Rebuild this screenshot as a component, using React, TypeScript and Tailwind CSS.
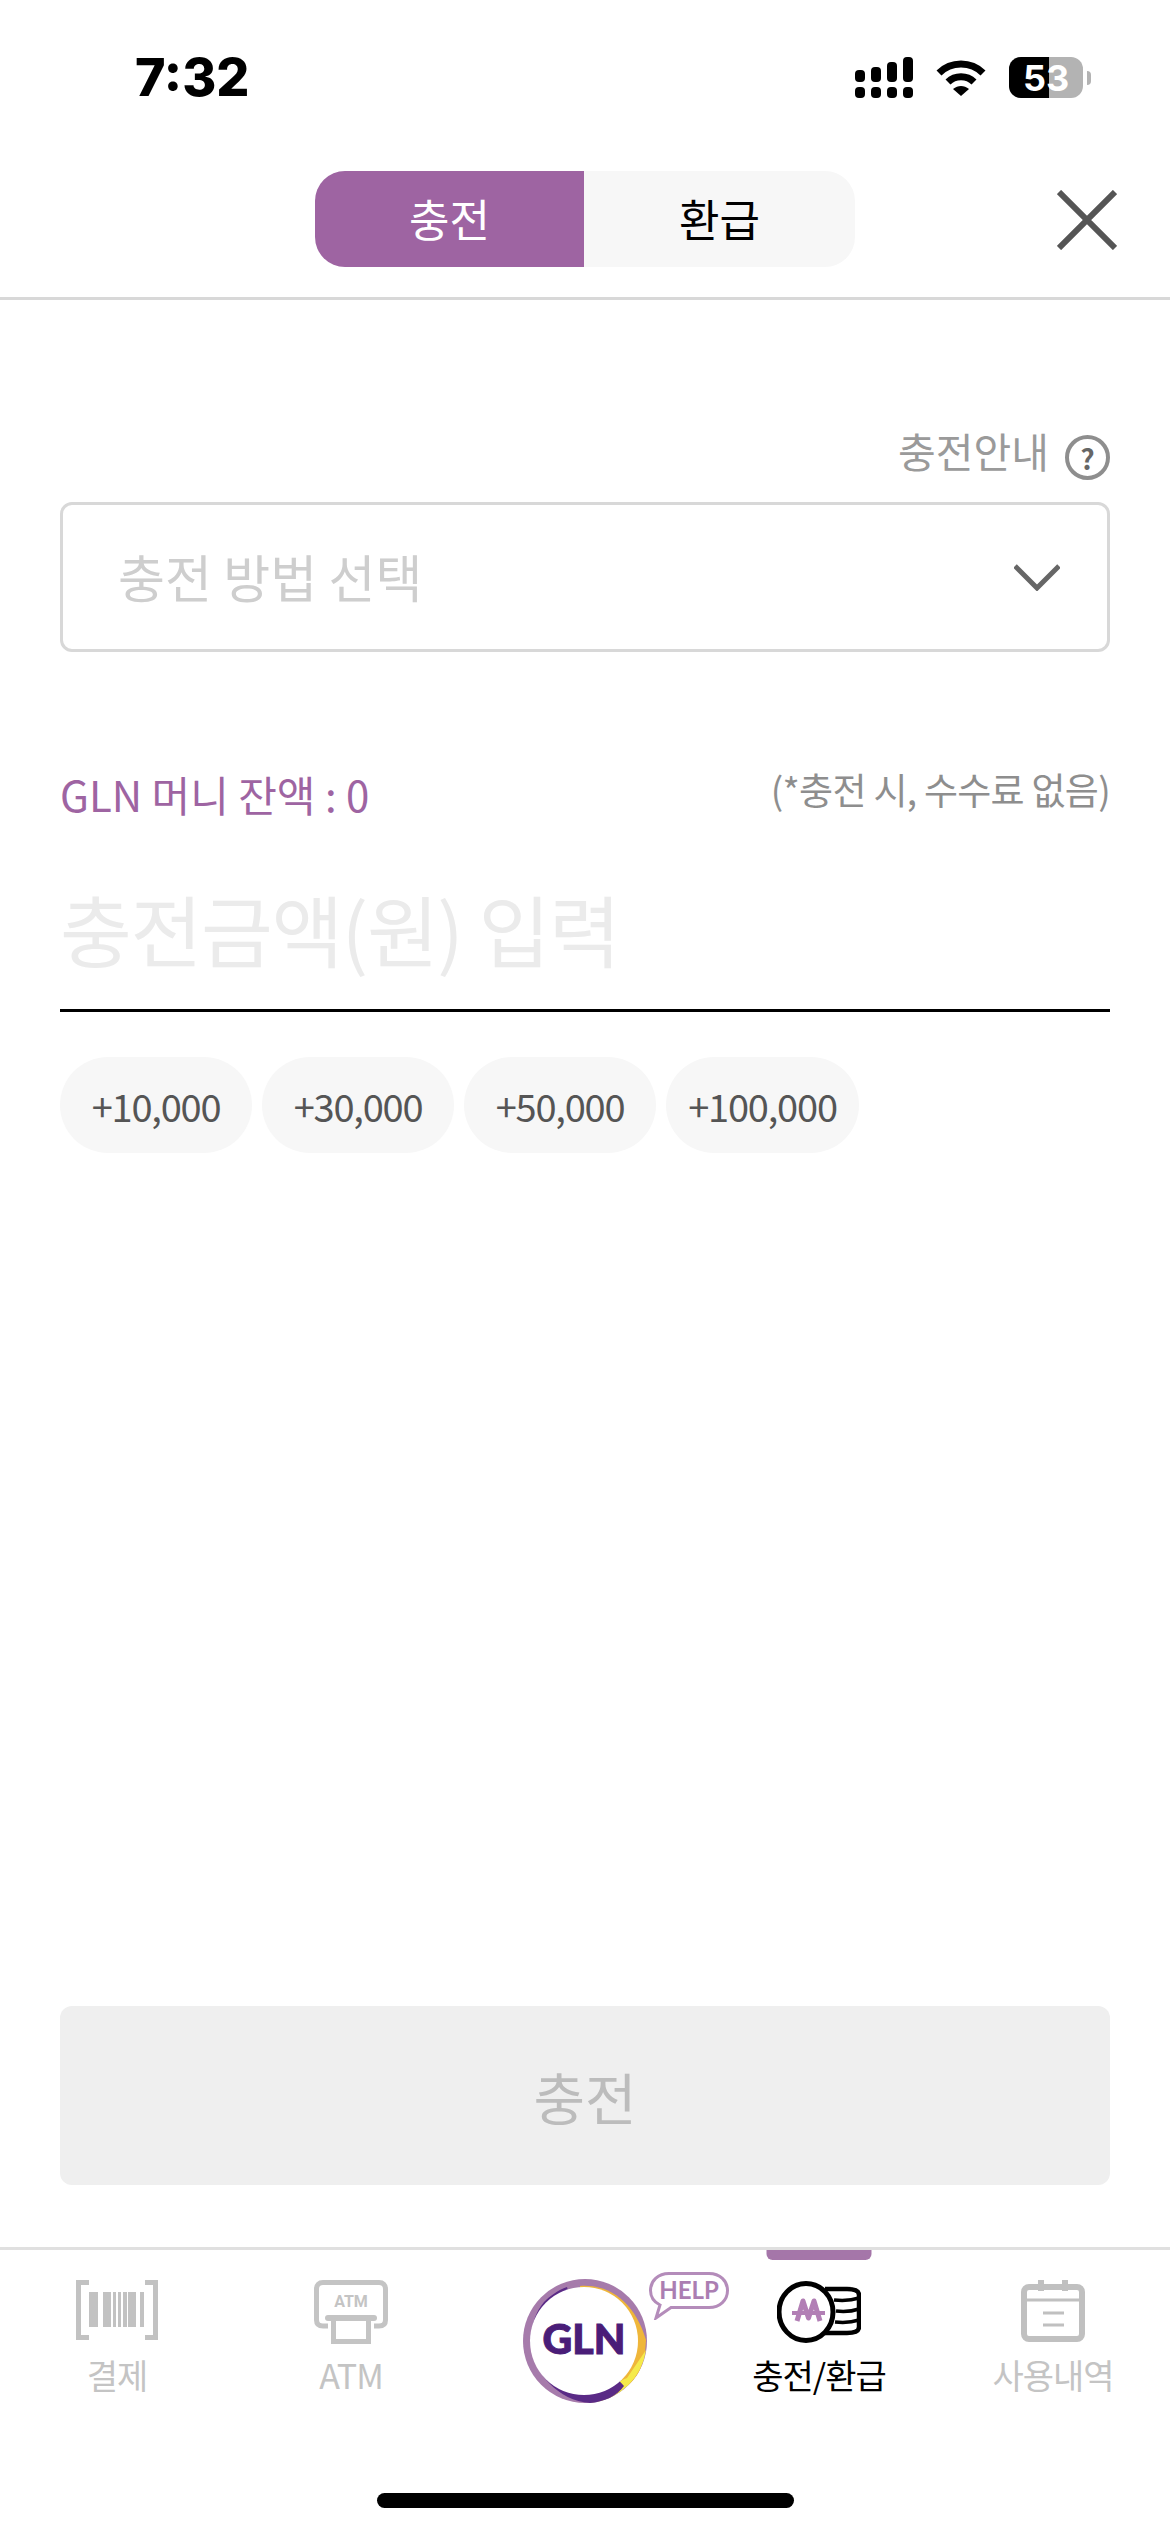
const kr = '"Noto Sans CJK KR", sans-serif';

const SignalIcon = () => (
  <svg width="58" height="41" viewBox="0 0 58 41" fill="#000">
    <rect x="0" y="13" width="10" height="12" rx="4" />
    <rect x="16" y="10" width="10" height="15" rx="4" />
    <rect x="32" y="5" width="10" height="20" rx="4" />
    <rect x="48" y="0" width="10" height="25" rx="4" />
    <rect x="0" y="30" width="10" height="11" rx="4" />
    <rect x="16" y="30" width="10" height="11" rx="4" />
    <rect x="32" y="30" width="10" height="11" rx="4" />
    <rect x="48" y="30" width="10" height="11" rx="4" />
  </svg>
);

const WifiIcon = () => (
  <svg width="50" height="37" viewBox="0 0 50 37" fill="none" stroke="#000" strokeWidth="7">
    <path d="M3 14 C15 2 35 2 47 14" />
    <path d="M12 23 C19 16 31 16 38 23" />
    <path d="M17 30 L25 37 L33 30 C28 26 22 26 17 30Z" fill="#000" stroke="none" />
  </svg>
);

const BatteryIcon = () => (
  <div className="flex items-center gap-[4px]">
    <div className="relative flex h-[41px] w-[74px] items-center justify-center overflow-hidden rounded-[12px] bg-[#b3b3b3]">
      <div className="absolute left-0 top-0 h-full w-[40px] bg-black" />
      <span className="relative text-[36px] font-bold leading-none text-white" style={{ fontFamily: 'Inter, sans-serif' }}>53</span>
    </div>
    <div className="h-[14px] w-[4px] rounded-r-full bg-[#b3b3b3]" />
  </div>
);

const BarcodeIcon = () => (
  <svg width="82" height="60" viewBox="0 0 82 60" fill="#c2c2c2">
    <path d="M13 2.5H2.5V57.5H13" fill="none" stroke="#c2c2c2" strokeWidth="5" />
    <path d="M69 2.5H79.5V57.5H69" fill="none" stroke="#c2c2c2" strokeWidth="5" />
    <rect x="13" y="12" width="9" height="35" />
    <rect x="27" y="12" width="8" height="35" />
    <rect x="37" y="12" width="3" height="35" />
    <rect x="42" y="12" width="3" height="35" />
    <rect x="47" y="12" width="4" height="35" />
    <rect x="52" y="12" width="8" height="35" />
    <rect x="64" y="12" width="4" height="35" />
  </svg>
);

const AtmIcon = () => (
  <svg width="74" height="64" viewBox="0 0 74 64" fill="none" stroke="#c4c4c4">
    <path d="M14 46H9C5 46 2.5 44 2.5 40V9C2.5 5 5 2.5 9 2.5H65C69 2.5 71.5 5 71.5 9V40C71.5 44 69 46 65 46H60" strokeWidth="5" />
    <path d="M14 38H60" strokeWidth="6" strokeLinecap="round" />
    <path d="M19.5 38V61.5H54.5V38" strokeWidth="5" />
    <text x="37" y="27" textAnchor="middle" fontSize="16" fontWeight="700" fill="#c4c4c4" stroke="none" fontFamily="Roboto, sans-serif">ATM</text>
  </svg>
);

const CoinIcon = () => (
  <svg width="84" height="64" viewBox="0 0 84 64" fill="none">
    <path d="M48 9H70C78 9 82 11 82 15V47C82 51 78 53 70 53H48" stroke="#000" strokeWidth="4.5" />
    <path d="M57 20C68 21 76 20 82 18M59 31C68 32 76 31 82 29M58 42C68 43 76 42 82 40" stroke="#000" strokeWidth="3.5" />
    <ellipse cx="29" cy="32" rx="27" ry="28.5" fill="#fff" stroke="#000" strokeWidth="5" />
    <path d="M20 41L26 21L31.5 38L37 21L43 41" stroke="#b27fb5" strokeWidth="5" strokeLinejoin="round" />
    <path d="M15 33H48" stroke="#b27fb5" strokeWidth="4" />
  </svg>
);

const CalendarIcon = () => (
  <svg width="64" height="62" viewBox="0 0 64 62" fill="none" stroke="#c0c0c0">
    <rect x="3" y="7" width="58" height="52" rx="5" strokeWidth="6" />
    <path d="M3 20H61" strokeWidth="3" />
    <path d="M20 0V11M44 0V11" strokeWidth="6" />
    <path d="M22 33H43M22 45H43" strokeWidth="3" />
  </svg>
);

const GlnLogo = () => (
  <svg width="126" height="126" viewBox="0 0 126 126">
    <circle cx="63" cy="63" r="62" fill="#a67bab" />
    <path d="M58 8C90 6 113 26 124 62L123 75C120 90 115 100 105 108L60 63Z" fill="#efb63a" />
    <path d="M124 72A62 62 0 0 1 70 124.6L75 113L105 100Z" fill="#f5ea4a" />
    <path d="M45 9C36 12 28 18 22 24C14 33 9 48 8 63C10 80 17 95 28 106C38 116 52 124 68 125C82 124 95 118 102 108L60 63Z" fill="#5a2a86" />
    <circle cx="62" cy="63" r="54" fill="#fff" />
    <text x="62" y="76" textAnchor="middle" fontSize="41" fontWeight="900" fill="#4a1d78" stroke="#4a1d78" strokeWidth="1" fontFamily="Lato, sans-serif">GLN</text>
  </svg>
);

const HelpBubble = () => (
  <svg width="80" height="48" viewBox="0 0 80 48">
    <path d="M20 1.5H60C71 1.5 78.5 9 78.5 18.5C78.5 28 71 35.5 60 35.5H22L7 46L11 33C5 30 1.5 25 1.5 18.5C1.5 9 9 1.5 20 1.5Z" fill="#fff" stroke="#b48cba" strokeWidth="3" />
    <text x="40" y="27" textAnchor="middle" fontSize="24" fontWeight="700" fill="#ab7eb2" fontFamily="Lato, sans-serif">HELP</text>
  </svg>
);

const NavItem = ({ icon, label, active }: { icon: React.ReactNode; label: string; active?: boolean }) => (
  <div className="relative flex w-[234px] flex-col items-center pt-[30px]">
    {active && <div className="absolute left-1/2 top-0 h-[10px] w-[105px] -translate-x-1/2 rounded-b-[6px] bg-[#a576a9]" />}
    <div className="flex h-[72px] items-start">{icon}</div>
    <span className={`mt-[3px] text-[34px] leading-[40px] tracking-[-1px] ${active ? 'text-black' : 'text-[#c4c4c4]'}`}>{label}</span>
  </div>
);

export default function App() {
  return (
    <div className="flex h-[2532px] w-[1170px] flex-col overflow-hidden bg-white" style={{ fontFamily: kr }}>
      {/* status bar */}
      <div className="flex h-[171px] items-start justify-between pl-[135px] pr-[79px] pt-[57px]">
        <span className="text-[52px] font-extrabold leading-[42px] text-black" style={{ fontFamily: 'Inter, sans-serif' }}>7:32</span>
        <div className="flex items-start gap-[23px]">
          <SignalIcon />
          <div className="pt-[2px]"><WifiIcon /></div>
          <BatteryIcon />
        </div>
      </div>

      {/* tabs */}
      <div className="grid h-[129px] grid-cols-[1fr_540px_1fr] border-b-[3px] border-[#d8d8d8]">
        <div />
        <div className="flex h-[96px] overflow-hidden rounded-[30px] text-[44px]">
          <div className="flex w-[269px] items-center justify-center bg-[#9e64a2] pb-[2px] text-white">충전</div>
          <div className="flex flex-1 items-center justify-center bg-[#f7f7f7] pb-[2px] text-black">환급</div>
        </div>
        <div className="flex justify-end pr-[53px] pt-[19px]">
          <svg width="60" height="60" viewBox="0 0 60 60" stroke="#555" strokeWidth="6">
            <path d="M2 2L58 58M58 2L2 58" />
          </svg>
        </div>
      </div>

      {/* form */}
      <div className="flex flex-1 flex-col px-[60px]">
        <div className="mt-[129px] flex h-[60px] items-start justify-end gap-[16px]">
          <span className="text-[41px] leading-[42px] text-[#9a9a9a]">충전안내</span>
          <div className="mt-[6px] flex h-[45px] w-[45px] items-center justify-center rounded-full border-[4px] border-[#8e8e8e] text-[28px] font-bold leading-none text-[#666]">?</div>
        </div>
        <div className="mt-[13px] flex h-[150px] items-center justify-between rounded-[12px] border-[3px] border-[#d8d8d8] pl-[55px] pr-[47px]">
          <span className="pb-[2px] text-[51px] text-[#cecece]">충전 방법 선택</span>
          <svg width="46" height="27" viewBox="0 0 46 27" fill="none" stroke="#666" strokeWidth="5">
            <path d="M1 2L23 24L45 2" />
          </svg>
        </div>

        <div className="mt-[112px] flex h-[60px] items-start justify-between">
          <span className="text-[42px] leading-[60px] text-[#9e64a2]">GLN 머니 잔액 : 0</span>
          <span className="text-[37px] leading-[50px] tracking-[-0.7px] text-[#8e8e8e]">(*충전 시, 수수료 없음)</span>
        </div>

        <div className="mt-[15px] flex h-[173px] items-end border-b-[3px] border-black pb-[31px]">
          <span className="text-[78px] leading-[100px] tracking-[-1.3px] text-[#ebebeb]">충전금액(원) 입력</span>
        </div>

        <div className="mt-[45px] flex gap-[10px] text-[38px] tracking-[-1.2px] text-[#555]">
          <div className="flex h-[96px] w-[192px] items-center justify-center rounded-[48px] bg-[#f7f7f7]">+10,000</div>
          <div className="flex h-[96px] w-[192px] items-center justify-center rounded-[48px] bg-[#f7f7f7]">+30,000</div>
          <div className="flex h-[96px] w-[192px] items-center justify-center rounded-[48px] bg-[#f7f7f7]">+50,000</div>
          <div className="flex h-[96px] w-[193px] items-center justify-center rounded-[48px] bg-[#f7f7f7]">+100,000</div>
        </div>

        <div className="mb-[62px] mt-auto flex h-[179px] items-center justify-center rounded-[12px] bg-[#efefef] text-[56px] text-[#bcbcbc]">충전</div>
      </div>

      {/* bottom nav */}
      <div className="relative h-[285px] border-t-[3px] border-[#e0e0e0]">
        <div className="flex">
          <NavItem icon={<BarcodeIcon />} label="결제" />
          <NavItem icon={<AtmIcon />} label="ATM" />
          <div className="relative flex w-[234px] justify-center pt-[28px]">
            <GlnLogo />
            <div className="absolute left-[181px] top-[22px]"><HelpBubble /></div>
          </div>
          <NavItem icon={<CoinIcon />} label="충전/환급" active />
          <NavItem icon={<CalendarIcon />} label="사용내역" />
        </div>
        <div className="absolute bottom-[24px] left-[377px] h-[15px] w-[417px] rounded-full bg-black" />
      </div>
    </div>
  );
}
